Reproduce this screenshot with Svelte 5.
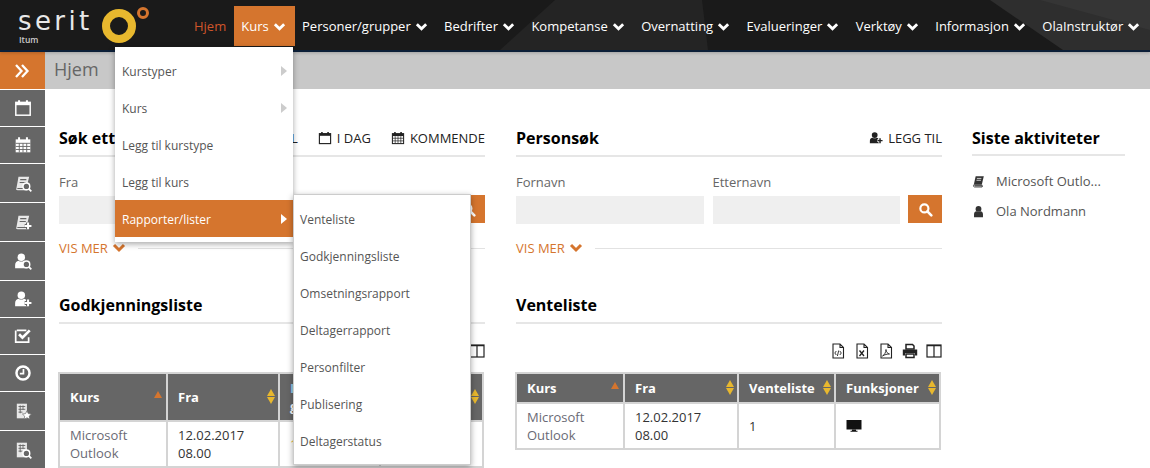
<script>
  const nav = ['Personer/grupper','Bedrifter','Kompetanse','Overnatting','Evalueringer','Verktøy','Informasjon','OlaInstruktør'];
  const menu1 = [
    { t: 'Kurstyper', sub: true }, { t: 'Kurs', sub: true }, { t: 'Legg til kurstype' },
    { t: 'Legg til kurs' }, { t: 'Rapporter/lister', sub: true, active: true }
  ];
  const menu2 = ['Venteliste','Godkjenningsliste','Omsetningsrapport','Deltagerrapport','Personfilter','Publisering','Deltagerstatus'];
  const ring = '<path d="M4.5 1v3M11.5 1v3" stroke="currentColor" stroke-width="1.8" fill="none"/>';
  const book = '<path d="M4 2.5h9.5L11 12.5H2.2L4 2.5z" fill="currentColor" opacity=".85"/><path d="M2.2 12.5c-.8 1.4 0 2 1 2h8.6l.6-1.2H3.6z" fill="currentColor" opacity=".85"/><path d="M5.5 5h5.5M5 7.5h5.5" stroke="#666" stroke-width=".9"/>';
  const lens = '<circle cx="11" cy="11" r="3" fill="#666" stroke="currentColor" stroke-width="1.3"/><path d="M13.2 13.2l2.2 2.2" stroke="currentColor" stroke-width="1.6"/>';
  const plus = '<path d="M9.5 11.5h6M12.5 8.5v6" stroke="#666" stroke-width="3.6"/><path d="M9.5 11.5h6M12.5 8.5v6" stroke="currentColor" stroke-width="1.8"/>';
  const person = '<circle cx="6.5" cy="4.6" r="3.3" fill="currentColor"/><path d="M1 14.5v-3c0-2.4 1.6-3.6 3-3.8 1.5 1 3.5 1 5 0 1.4.2 3 1.400 3 3.800v3z" fill="currentColor"/>';
  const report = '<path d="M2.500 1.500h9v13h-9z" fill="currentColor" opacity=".85"/><path d="M4 4h6M4 6.500h6M4 9h3.500M5.500 3v7M8 3v4" stroke="#666" stroke-width=".8"/>';
  const icons = {
    cal: '<rect x="1.600" y="3" width="12.800" height="11.400" fill="none" stroke="currentColor" stroke-width="1.300"/><path d="M1.500 3.300h13v2.200h-13z" fill="currentColor"/>' + ring,
    calgrid: '<rect x="1.500" y="3" width="13" height="11.500" fill="currentColor"/><path d="M1.500 6.500h13M1.500 9.300h13M1.500 12h13M4.700 6.500v8M8 6.500v8M11.300 6.500v8" stroke="#666" stroke-width=".8"/>' + ring,
    calgridd: '<rect x="1.600" y="3" width="12.800" height="11.400" fill="none" stroke="currentColor" stroke-width="1.200"/><path d="M1.500 3.300h13v2.500h-13z" fill="currentColor"/><path d="M1.500 8.300h13M1.500 11.300h13M4.800 6v8M8 6v8M11.200 6v8" stroke="currentColor" stroke-width=".8"/>' + ring,
    booksearch: book + lens,
    bookplus: book + plus,
    usersearch: person + lens,
    userplus: person + plus,
    check: '<path d="M2.500 3h8.500M13 9v4.500H1.500V3" fill="none" stroke="currentColor" stroke-width="1.500"/><path d="M4.500 6.500l3 3L14 3" fill="none" stroke="currentColor" stroke-width="2.400"/>',
    clock: '<circle cx="8" cy="8" r="5.800" fill="none" stroke="currentColor" stroke-width="2.200"/><path d="M8.400 4.500V8.600H5.200" fill="none" stroke="currentColor" stroke-width="1.500"/>',
    repstar: report + '<path d="M11.500 7.800l1.200 2.500 2.800.4-2 1.900.5 2.700-2.500-1.300-2.500 1.300.5-2.700-2-1.900 2.800-.4z" fill="currentColor" stroke="#666" stroke-width=".6"/>',
    repsearch: report + lens,
    search: '<circle cx="6.800" cy="6.800" r="4.300" fill="none" stroke="currentColor" stroke-width="2.300"/><path d="M10 10l4.200 4.200" stroke="currentColor" stroke-width="2.800" stroke-linecap="round"/>',
    user: '<circle cx="8" cy="4.800" r="3.600" fill="currentColor"/><path d="M2.500 15v-3.500c0-2.400 1.500-3.600 3-3.800 1.500 1 3.500 1 5 0 1.500.2 3 1.400 3 3.800V15z" fill="currentColor"/>',
    book2: '<path d="M4.500 1.500h10L12 12H2.200l2.300-10.500z" fill="currentColor"/><path d="M2.200 12c-1 2 0 2.800 1 2.800H12.400l.5-1.300H3.500c-.6 0-.6-.8 0-.8h9.500" fill="none" stroke="currentColor" stroke-width="1"/><path d="M6 4.200h5.500M5.500 6.500H11" stroke="#fff" stroke-width=".9"/>',
    addperson: '<circle cx="6.500" cy="4.600" r="3.300" fill="currentColor"/><path d="M1 14v-2.800c0-2.400 1.600-3.400 3-3.600 1.500 1 3.500 1 5 0 1 .1 2 .7 2.500 1.800v4.600z" fill="currentColor"/><path d="M9.500 11h6M12.500 8v6" stroke="#fff" stroke-width="3.400"/><path d="M9.800 11h5.700M12.600 8.200V14" stroke="currentColor" stroke-width="1.700"/>',
    fcode: '<path d="M3 1h7l3.500 3.500V15H3z M10 1v3.500h3.500" fill="none" stroke="currentColor" stroke-width="1.100"/><path d="M6.300 8L4.800 10l1.500 2M9.800 8l1.500 2-1.500 2M8.700 7.500l-1.300 5.500" fill="none" stroke="currentColor" stroke-width=".9"/>',
    fxls: '<path d="M3 1h7l3.500 3.500V15H3z M10 1v3.500h3.500" fill="none" stroke="currentColor" stroke-width="1.100"/><path d="M5.500 7.500l4.500 5.500M10 7.500l-4.500 5.500" stroke="currentColor" stroke-width="1.300"/>',
    fpdf: '<path d="M3 1h7l3.500 3.500V15H3z M10 1v3.500h3.500" fill="none" stroke="currentColor" stroke-width="1.100"/><path d="M4.500 13c2-1 3.500-4 3.500-6.500 0 2.500 1.500 4 3.500 4.500-2.300 0-4.800.6-7 2z" fill="none" stroke="currentColor" stroke-width=".9"/>',
    print: '<path d="M4 1.500h6.500L12 3v3H4z M4 11h8v3.500H4z" fill="none" stroke="currentColor" stroke-width="1.500"/><path d="M0.800 6.500h14.400v6H13V10H3v2.500H.8z" fill="currentColor"/>',
    cols: '<rect x="1" y="2" width="14" height="12" fill="none" stroke="currentColor" stroke-width="1.200"/><path d="M1 2.600h14M8 2v12" stroke="currentColor" stroke-width="1.200"/>',
    desktop: '<path d="M.5 2h15v9.500H.5z" fill="currentColor"/><path d="M6 11.500h4v1.300h1.500v1H4.500v-1H6z" fill="currentColor"/>'
  };
  const side = [
    ['cal',0],['calgrid',0],['booksearch',1],['bookplus',1],['usersearch',1],
    ['userplus',0],['check',0],['clock',0],['repstar',1],['repsearch',1]
  ];
  const tools = ['fcode','fxls','fpdf','print','cols'];
</script>

{#snippet icon(name, cls)}
  <svg class={cls} viewBox="0 0 16 16" aria-hidden="true">{@html icons[name]}</svg>
{/snippet}

{#snippet chevron(cls)}
  <svg class={cls} viewBox="0 0 14 10" aria-hidden="true"><path d="M2 2l5 5 5-5" fill="none" stroke="currentColor" stroke-width="3"/></svg>
{/snippet}

{#snippet sort(one)}
  <span class="sort" class:one>
    <i class="up"></i>
    {#if !one}<i class="down"></i>{/if}
  </span>
{/snippet}

{#snippet toolbar()}
  <div class="tools">
    {#each tools as t}{@render icon(t, 'tool')}{/each}
  </div>
{/snippet}

<div class="page">
  <header class="top">
    <svg class="decor" viewBox="0 0 1150 50" preserveAspectRatio="none" aria-hidden="true">
      <polygon points="555,0 702,0 708,50 500,50" fill="#242424"/>
      <polygon points="990,0 1150,0 1150,50 1063,50" fill="#2e2e2e"/>
      <polygon points="1040,0 1150,0 1150,30" fill="#353535"/>
    </svg>
    <div class="logo">
      <div class="word">serit<small>Itum</small></div>
      <svg class="mark" viewBox="0 0 50 36" aria-hidden="true">
        <circle cx="17" cy="19" r="13" fill="none" stroke="#e8b82e" stroke-width="8"/>
        <circle cx="41" cy="6" r="4.500" fill="none" stroke="#d5752e" stroke-width="3"/>
      </svg>
    </div>
    <nav class="nav">
      <a class="home">Hjem</a>
      <a class="open">Kurs {@render chevron('chev')}</a>
      {#each nav as n}
        <a>{n} {@render chevron('chev')}</a>
      {/each}
    </nav>
  </header>

  <div class="body">
    <aside class="side">
      <div class="toggle">
        <svg viewBox="0 0 16 16" aria-hidden="true"><path d="M2 2l5.500 6L2 14M8 2l5.500 6L8 14" fill="none" stroke="currentColor" stroke-width="2.300"/></svg>
      </div>
      {#each side as [name, tall]}
        <div class="sitem" class:tall>{@render icon(name, 'sicon')}</div>
      {/each}
    </aside>

    <div class="content">
      <div class="titlebar">Hjem</div>
      <main class="main">
        <div class="cols">
          <div class="col">
            <section class="search">
              <div class="head">
                <h2>Søk etter kurs</h2>
                <div class="links">
                  <a>ALL</a>
                  <a>{@render icon('cal','lk')} I DAG</a>
                  <a>{@render icon('calgridd','lk')} KOMMENDE</a>
                </div>
              </div>
              <div class="form">
                <label>Fra<span class="input"></span></label>
                <label>Til<span class="input"></span></label>
                <button>{@render icon('search','mag')}</button>
              </div>
              <div class="more"><span>VIS MER {@render chevron('mchev')}</span></div>
            </section>
            <section class="list">
              <div class="head"><h2>Godkjenningsliste</h2></div>
              {@render toolbar()}
              <table class="left">
                <thead>
                  <tr>
                    <th class="w108">Kurs {@render sort(true)}</th>
                    <th class="w112">Fra {@render sort(false)}</th>
                    <th class="w101"><span class="blue">I</span>nnmeldt<br />godkjent {@render sort(false)}</th>
                    <th>Status {@render sort(false)}</th>
                  </tr>
                </thead>
                <tbody>
                  <tr>
                    <td class="link">Microsoft Outlook</td>
                    <td>12.02.2017 08.00</td>
                    <td class="warn">1</td>
                    <td></td>
                  </tr>
                </tbody>
              </table>
            </section>
          </div>

          <div class="col">
            <section class="search">
              <div class="head">
                <h2>Personsøk</h2>
                <div class="links"><a>{@render icon('addperson','lk')} LEGG TIL</a></div>
              </div>
              <div class="form">
                <label>Fornavn<span class="input"></span></label>
                <label>Etternavn<span class="input"></span></label>
                <button>{@render icon('search','mag')}</button>
              </div>
              <div class="more"><span>VIS MER {@render chevron('mchev')}</span></div>
            </section>
            <section class="list">
              <div class="head"><h2>Venteliste</h2></div>
              {@render toolbar()}
              <table class="right">
                <thead>
                  <tr>
                    <th class="w108">Kurs {@render sort(true)}</th>
                    <th class="w114">Fra {@render sort(false)}</th>
                    <th class="w97">Venteliste {@render sort(false)}</th>
                    <th>Funksjoner {@render sort(false)}</th>
                  </tr>
                </thead>
                <tbody>
                  <tr>
                    <td class="link">Microsoft Outlook</td>
                    <td>12.02.2017 08.00</td>
                    <td>1</td>
                    <td>{@render icon('desktop','dk')}</td>
                  </tr>
                </tbody>
              </table>
            </section>
          </div>

          <div class="activity">
            <div class="head short"><h2>Siste aktiviteter</h2></div>
            <ul>
              <li>{@render icon('book2','ai')}<span>Microsoft Outlo...</span></li>
              <li>{@render icon('user','ai')}<span>Ola Nordmann</span></li>
            </ul>
          </div>
        </div>
      </main>
    </div>
  </div>

  <div class="menu m1">
    {#each menu1 as m}
      <div class="mi" class:active={m.active}>
        {m.t}{#if m.sub}<i class="tri"></i>{/if}
      </div>
    {/each}
  </div>
  <div class="menu m2">
    {#each menu2 as m}<div class="mi">{m}</div>{/each}
  </div>
</div>

<style>
  :global(body) { margin: 0; background: #fff; }
  .page {
    position: relative; width: 1150px; height: 468px; overflow: hidden;
    font-family: "Open Sans", sans-serif; font-size: 13px; color: #555;
  }
  .top {
    position: relative; height: 50px; background: #1a1a1a;
    border-bottom: 2px solid #0c1f38; display: flex; align-items: flex-start;
    box-shadow: 0 1px 3px rgba(0,0,0,.2);
  }
  .decor { position: absolute; inset: 0; width: 100%; height: 100%; }
  .logo { position: relative; width: 194px; height: 50px; flex: none; display: flex; }
  .word {
    margin: 6px 0 0 18px; width: 84px; color: #e8e8e8;
    font-family: "DejaVu Sans", sans-serif; font-weight: 400; font-size: 26px; line-height: 30px; letter-spacing: 3.400px;
  }
  .word small { display: block; font-size: 8.500px; line-height: 9px; letter-spacing: 0; font-family: "Open Sans", sans-serif; font-weight: 600; margin: -1px 0 0 1px; color: #ccc; }
  .mark { width: 50px; height: 36px; margin-top: 7px; }
  .nav { position: relative; display: flex; margin-top: 6px; color: #fff; }
  .nav a { display: flex; align-items: center; gap: 4px; height: 40px; padding: 0 8.500px 0 7.900px; white-space: nowrap; }
  .nav .home { color: #d0562a; padding: 0 8px 0 0; }
  .nav .open { background: #d5752e; padding: 0 9px 0 7px; margin-right: -.5px; }
  .chev { width: 13px; height: 10px; flex: none; margin-top: 1px; }

  .body { display: flex; }
  .side { width: 45px; flex: none; display: flex; flex-direction: column; gap: 1px; }
  .toggle { height: 37px; background: #d5752e; color: #fff; display: flex; align-items: center; justify-content: center; padding-right: 1px; box-sizing: border-box; }
  .toggle svg { width: 16px; height: 16px; }
  .sitem { height: 36px; background: #666; color: #fff; display: flex; align-items: center; justify-content: center; }
  .sitem.tall { height: 38px; }
  .sicon { width: 18px; height: 18px; }

  .content { flex: 1; min-width: 0; }
  .titlebar { height: 37px; background: #c8c8c8; color: #666; font-size: 18px; line-height: 35px; padding-left: 9px; }
  .main { padding: 38px 0 0 14px; }
  .cols { display: flex; }
  .col { width: 426px; margin-right: 31px; flex: none; }
  .activity { width: 153px; flex: none; margin-left: -1px; }

  .head { display: flex; justify-content: space-between; align-items: flex-start; height: 28px; border-bottom: 2px solid #e6e6e6; }
  .head.short { height: 27px; }
  h2 { margin: 0; color: #000; font-size: 16px; line-height: 22px; font-weight: 700; }
  .links { display: flex; gap: 20px; color: #222; font-size: 13px; line-height: 22px; }
  .links a { display: flex; align-items: center; gap: 5px; }
  .lk { width: 14px; height: 14px; color: #222; }

  .form { display: flex; align-items: flex-end; gap: 9px; margin-top: 16px; }
  label { display: block; flex: 1; color: #666; font-size: 13px; line-height: 18px; }
  .input { display: block; height: 28px; margin-top: 5px; background: #efefef; }
  button { width: 34px; height: 28px; margin: 0 0 1px -1px; padding: 0; border: 0; background: #d5752e; color: #fff; display: flex; align-items: center; justify-content: center; }
  .mag { width: 15px; height: 15px; }

  .more { display: flex; align-items: center; margin-top: 14px; height: 20px; color: #d5752e; font-size: 13px; }
  .more span { display: flex; align-items: center; gap: 4px; padding-right: 12px; white-space: nowrap; background: #fff; }
  .more::after { content: ""; flex: 1; height: 1px; background: #e2e2e2; }
  .mchev { width: 14px; height: 10px; }

  .list { margin-top: 36px; }
  .tools { display: flex; justify-content: flex-end; gap: 8px; height: 18px; margin: 19px 0 11px; color: #222; }
  .tool { width: 16px; height: 16px; }

  table { width: 426px; margin-left: -1px; table-layout: fixed; border-collapse: collapse; border: 2px solid #d4d4d4; font-size: 13px; color: #333; }
  th, td { border: 2px solid #d4d4d4; }
  th { position: relative; background: #666; color: #fff; font-weight: 700; text-align: left; padding: 4px 20px 4px 10px; line-height: 18px; height: 20px; }
  td { padding: 4px 10px; line-height: 18px; height: 36px; }
  td.link { color: #6a6a75; }
  .left th { height: 38px; }
  .blue { color: #9bd0ee; }
  td.warn { color: #e8b82e; }
  .w108 { width: 108px; box-sizing: border-box; }
  .w112 { width: 112px; box-sizing: border-box; }
  .w101 { width: 101px; box-sizing: border-box; }
  .w114 { width: 114px; box-sizing: border-box; }
  .w97 { width: 97px; box-sizing: border-box; }
  .sort { position: absolute; right: 3px; top: 50%; margin-top: -8px; display: flex; flex-direction: column; gap: 1px; }
  .sort i { display: block; width: 0; height: 0; border-left: 4.500px solid transparent; border-right: 4.500px solid transparent; }
  .sort .up { border-bottom: 7px solid #e8b82e; }
  .sort .down { border-top: 7px solid #e8b82e; }
  .sort.one { margin-top: -6px; right: 4px; }
  .sort.one .up { border-bottom-color: #d5752e; }
  .dk { width: 16px; height: 16px; color: #111; display: block; }

  ul { list-style: none; margin: 10px 0 0; padding: 0; }
  li { display: flex; align-items: center; height: 30px; color: #555; }
  .ai { width: 13px; height: 13px; color: #333; margin-right: 11px; }

  .menu { position: absolute; width: 178px; background: #fff; box-shadow: 0 2px 6px rgba(0,0,0,.35); font-size: 12px; color: #555; padding: 5px 0; }
  .m1 { left: 115px; top: 47px; }
  .m2 { left: 293px; top: 194px; border: 1px solid #ccc; box-sizing: border-box; }
  .mi { position: relative; height: 37px; line-height: 39px; padding-left: 7px; }
  .m2 .mi { padding-left: 6px; }
  .mi.active { background: #d5752e; color: #fff; }
  .tri { position: absolute; right: 6px; top: 14px; border-left: 6px solid #ccc; border-top: 5px solid transparent; border-bottom: 5px solid transparent; }
  .active .tri { border-left-color: #fff; }
</style>
